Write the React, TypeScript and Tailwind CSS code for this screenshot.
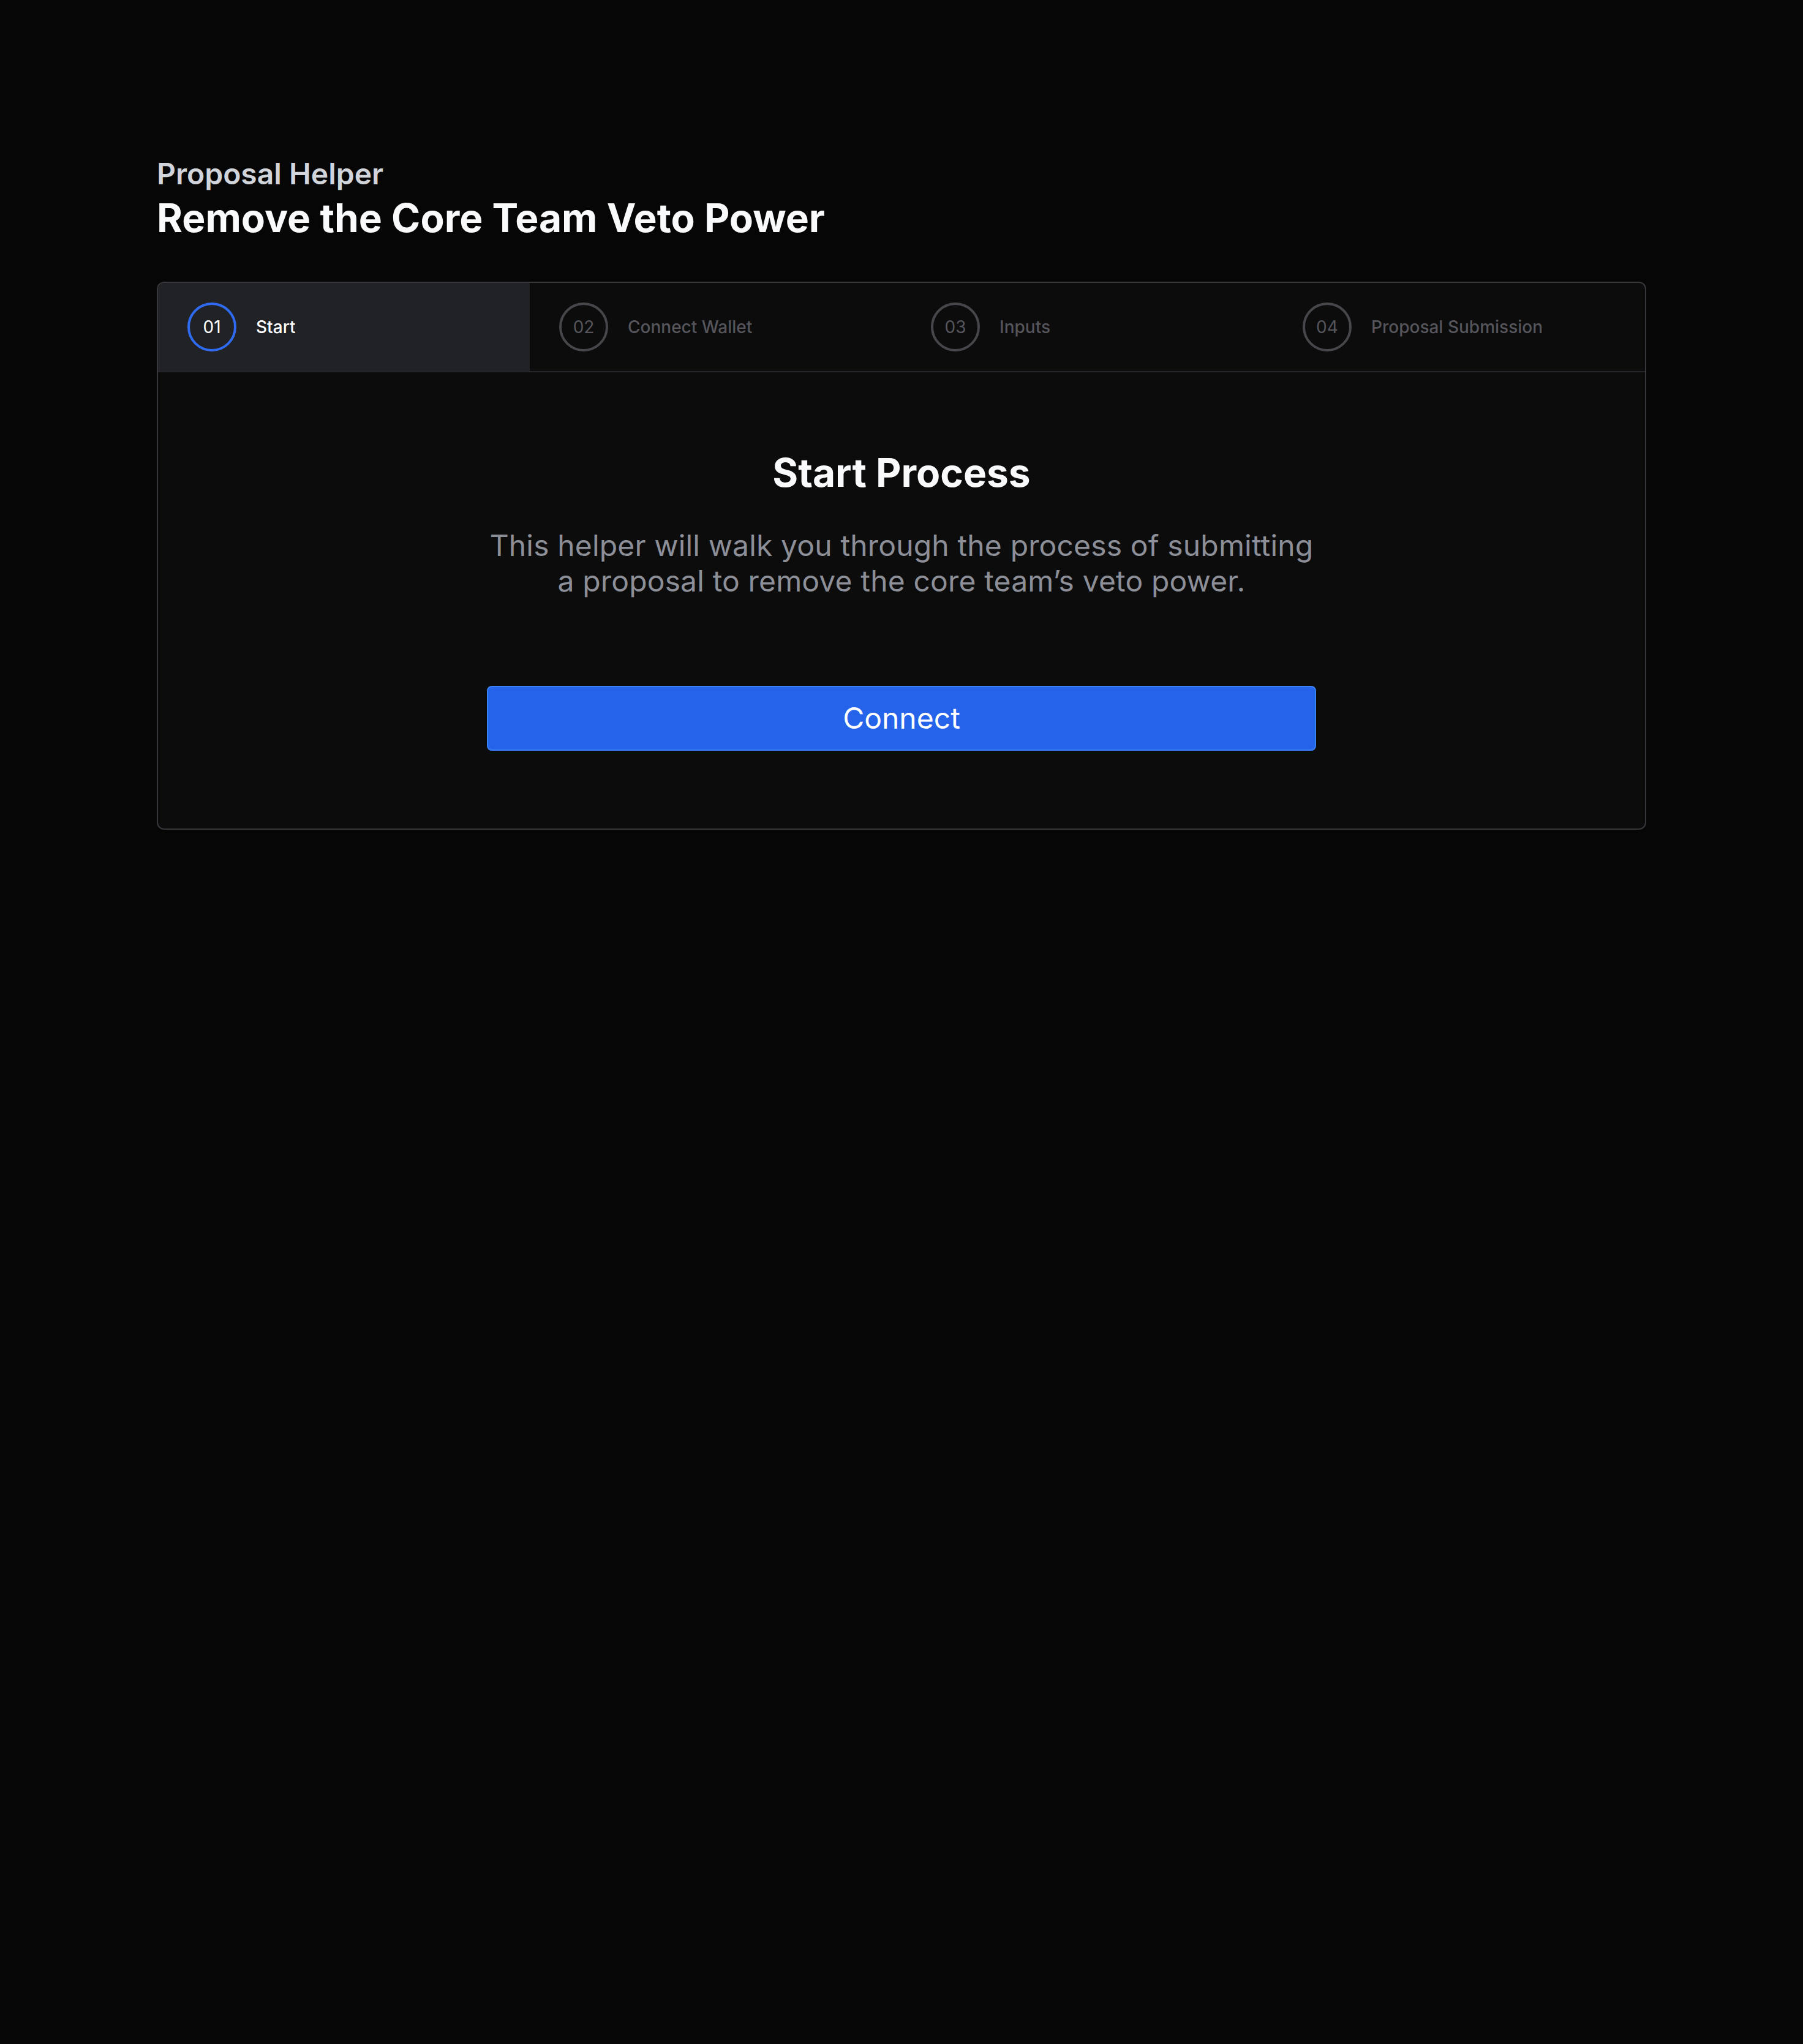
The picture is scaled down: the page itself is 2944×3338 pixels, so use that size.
import React from 'react';

const steps = [
  { num: '01', label: 'Start' },
  { num: '02', label: 'Connect Wallet' },
  { num: '03', label: 'Inputs' },
  { num: '04', label: 'Proposal Submission' },
];

function StepTab({ num, label, active }: { num: string; label: string; active: boolean }) {
  return (
    <div
      className={
        active
          ? 'flex items-center gap-8 px-12 py-8 bg-[#212226]'
          : 'flex items-center gap-8 px-12 py-8'
      }
    >
      <div
        className={
          active
            ? 'w-20 h-20 shrink-0 rounded-full border-4 border-[#2f6bf0] flex items-center justify-center text-[28px] text-white'
            : 'w-20 h-20 shrink-0 rounded-full border-4 border-[#46464b] flex items-center justify-center text-[28px] text-[#55555b]'
        }
      >
        {num}
      </div>
      <span className={active ? 'text-[28px] font-medium text-white' : 'text-[28px] font-medium text-[#55555b]'}>
        {label}
      </span>
    </div>
  );
}

export default function App() {
  return (
    <div className="min-h-screen bg-[#060606] px-64 pt-[252px] font-['Inter',sans-serif]">
      {/* Header */}
      <p className="text-[48px] leading-[64px] font-semibold text-[#d1d5db]">Proposal Helper</p>
      <h1 className="mt-[4px] text-[64px] leading-[72px] font-bold text-[#f9fafb]">Remove the Core Team Veto Power</h1>

      {/* Card */}
      <div className="mt-[68px] rounded-[12px] border-2 border-[#36363b] bg-[#0c0c0d] overflow-hidden">
        <div className="grid grid-cols-4 border-b-2 border-[#26262a]">
          {steps.map((s, i) => (
            <StepTab key={s.num} num={s.num} label={s.label} active={i === 0} />
          ))}
        </div>

        <div className="flex flex-col items-center pt-32 pb-[127px]">
          <h2 className="text-[64px] leading-[72px] font-bold text-[#f9fafb]">Start Process</h2>
          <p className="mt-[54px] w-[1360px] text-center text-[48px] leading-[58px] tracking-[0.15px] text-[#8c8f97]">
            This helper will walk you through the process of submitting a proposal to remove the core team’s veto power.
          </p>
          <button className="mt-[142px] w-[1354px] h-[106px] rounded-[8px] bg-[#2563eb] border-2 border-[#3b82f6] text-white text-[48px]">
            Connect
          </button>
        </div>
      </div>
    </div>
  );
}
